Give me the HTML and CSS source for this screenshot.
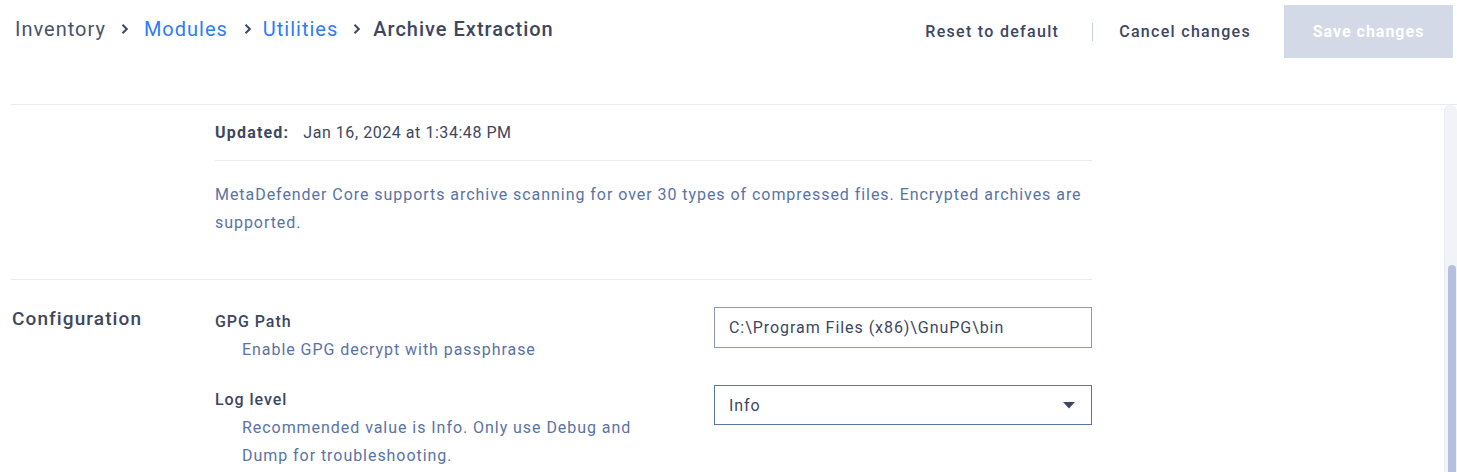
FILE: index.html
```html
<!DOCTYPE html>
<html>
<head>
<meta charset="utf-8">
<link rel="stylesheet" href="styles.css">
</head>
<body>
<div class="topbar">
  <nav class="crumbs">
    <span class="crumb">Inventory</span>
    <svg class="chev" viewBox="0 0 8 12" width="8" height="12"><path d="M1.5 1.8 L5.8 6 L1.5 10.2" fill="none" stroke="#3d4760" stroke-width="2"/></svg>
    <a class="crumb link">Modules</a>
    <svg class="chev" viewBox="0 0 8 12" width="8" height="12"><path d="M1.5 1.8 L5.8 6 L1.5 10.2" fill="none" stroke="#3d4760" stroke-width="2"/></svg>
    <a class="crumb link">Utilities</a>
    <svg class="chev" viewBox="0 0 8 12" width="8" height="12"><path d="M1.5 1.8 L5.8 6 L1.5 10.2" fill="none" stroke="#3d4760" stroke-width="2"/></svg>
    <span class="crumb current">Archive Extraction</span>
  </nav>
  <div class="actions">
    <button class="txtbtn">Reset to default</button>
    <span class="sep"></span>
    <button class="txtbtn">Cancel changes</button>
    <button class="savebtn">Save changes</button>
  </div>
</div>
<div class="scrollarea">
  <div class="main">
    <section class="section">
      <div class="side"></div>
      <div class="body">
        <div class="updated"><span class="ulabel">Updated:</span><span class="uval">Jan 16, 2024 at 1:34:48 PM</span></div>
        <p class="desc">MetaDefender Core supports archive scanning for over 30 types of compressed files. Encrypted archives are supported.</p>
      </div>
    </section>
    <section class="section config">
      <div class="side"><h2>Configuration</h2></div>
      <div class="body">
        <div class="field">
          <div class="finfo">
            <div class="fname">GPG Path</div>
            <div class="fhelp">Enable GPG decrypt with passphrase</div>
          </div>
          <div class="input">C:\Program Files (x86)\GnuPG\bin</div>
        </div>
        <div class="field">
          <div class="finfo">
            <div class="fname">Log level</div>
            <div class="fhelp">Recommended value is Info. Only use Debug and Dump for troubleshooting.</div>
          </div>
          <div class="input select">Info<svg class="caret" viewBox="0 0 12 7" width="12" height="7"><path d="M0 0 H12 L6 6.5 Z" fill="#3d4760"/></svg></div>
        </div>
      </div>
    </section>
  </div>
  <div class="scrollbar"><div class="thumb"></div></div>
</div>
</body>
</html>
```

FILE: styles.css
```css
* { box-sizing: border-box; }
html, body { margin: 0; padding: 0; background: #fff; }
body {
  font-family: Roboto, "Liberation Sans", sans-serif;
  color: #3d4760;
  letter-spacing: 0.95px;
  width: 1457px;
  height: 472px;
  overflow: hidden;
}
.topbar {
  display: flex;
  justify-content: space-between;
  align-items: flex-start;
  height: 104px;
  padding: 5px 4px 0 15px;
}
.crumbs {
  display: flex;
  align-items: center;
  height: 48px;
  font-size: 20px;
  letter-spacing: 1px;
}
.crumb { color: #4a5268; }
.crumb.link { color: #2e7cf6; }
.crumb.current { color: #3d4760; font-weight: 500; letter-spacing: 1px; }
.chev { margin: 0 15px 0 15px; }
.chev:nth-of-type(2) { margin-left: 16px; margin-right: 11px; }
.chev:nth-of-type(3) { margin-left: 15px; margin-right: 12px; }
.actions {
  display: flex;
  align-items: center;
  height: 53px;
}
.txtbtn {
  font-family: inherit;
  font-size: 16px;
  font-weight: 500;
  letter-spacing: 1.3px;
  color: #3d4760;
  background: none;
  border: 0;
  padding: 0;
}
.sep {
  width: 1px;
  height: 18px;
  background: #c9d0de;
  margin: 0 26px 0 33px;
}
.savebtn {
  margin-left: 33px;
  width: 169px;
  height: 53px;
  border: 0;
  background: #d3d9e6;
  color: #fff;
  font-family: inherit;
  font-size: 16px;
  font-weight: 700;
  letter-spacing: 1px;
}
.scrollarea {
  display: flex;
  border-top: 1px solid #e8eaf0;
  margin-left: 11px;
  height: 368px;
}
.main { width: 1081px; }
.scrollbar {
  margin-left: auto;
  width: 13px;
  background: #f1f3f7;
  border-left: 1px solid #e6e9f0;
  border-top-left-radius: 6px;
  border-top-right-radius: 6px;
  display: flex;
  flex-direction: column;
  justify-content: flex-end;
  padding: 0 1px 0 3px;
}
.thumb {
  height: 207px;
  background: #b4c0dc;
  border-radius: 4px 4px 0 0;
}
.section {
  display: flex;
  border-bottom: 1px solid #e8eaf0;
}
.side { width: 204px; flex: none; }
.body { flex: 1; }
.updated {
  height: 56px;
  display: flex;
  align-items: center;
  font-size: 16px;
  border-bottom: 1px solid #e8eaf0;
}
.ulabel { font-weight: 700; margin-right: 14px; letter-spacing: 1.2px; }
.uval { color: #3d4760; letter-spacing: 0.55px; }
.desc {
  margin: 0;
  padding: 20px 0 42px;
  font-size: 16px;
  line-height: 28px;
  color: #5a73a5;
}
.config { border-bottom: 0; padding-top: 27px; }
.config h2 {
  margin: 0;
  padding-left: 1px;
  font-size: 19px;
  font-weight: 500;
  letter-spacing: 1.1px;
  color: #3d4760;
  line-height: 24px;
}
.field {
  display: flex;
  justify-content: space-between;
  margin-bottom: 21px;
}
.finfo { width: 440px; padding-top: 1px; }
.fname { font-size: 16px; font-weight: 500; line-height: 28px; }
.fhelp { font-size: 16px; color: #5a73a5; line-height: 28px; padding-left: 27px; }
.input {
  width: 378px;
  height: 41px;
  border: 1px solid #8b98b6;
  display: flex;
  align-items: center;
  padding: 0 14px;
  font-size: 16px;
  color: #3d4760;
}
.select { border-color: #5a73a5; justify-content: space-between; height: 40px; }
.caret { margin-right: 2px; }
```
